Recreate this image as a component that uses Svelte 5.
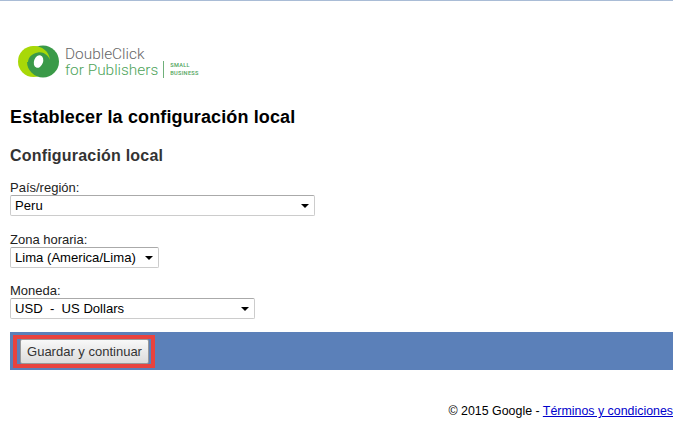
<script>
    const fields = [
        { label: 'País/región:', value: 'Peru', width: 305 },
        { label: 'Zona horaria:', value: 'Lima (America/Lima)', width: 149 },
        { label: 'Moneda:', value: 'USD\u00a0\u00a0-\u00a0\u00a0US Dollars', width: 245 }
    ];
</script>

<div class="page">
    <div class="logo">
        <svg width="41" height="33" viewBox="0 0 41 33">
            <circle cx="15.5" cy="16.5" r="15.5" fill="#a8d808"/>
            <circle cx="25" cy="16.5" r="16" fill="#3a9a48"/>
            <path d="M15.5 1 C24 1 31 6 32 15 C30 10 25 6.5 20 7.5 C14 8.5 10.5 12 10 17 L4 17 L6 6 Z" fill="#a8d808"/>
            <ellipse cx="20.5" cy="16.5" rx="4.5" ry="6.5" transform="rotate(20 20.5 16.5)" fill="white"/>
        </svg>
        <div class="logo-name">
            <span class="dc">DoubleClick</span>
            <span class="fp">for Publishers</span>
        </div>
        <div class="logo-tier">SMALL<br />BUSINESS</div>
    </div>

    <h1>Establecer la configuración local</h1>
    <h2>Configuración local</h2>

    {#each fields as field}
        <div class="field">
            <label for={field.label}>{field.label}</label>
            <div class="select" style="width: {field.width}px">
                <select id={field.label}>
                    <option>{field.value}</option>
                </select>
            </div>
        </div>
    {/each}

    <div class="actions">
        <div class="highlight">
            <button>Guardar y continuar</button>
        </div>
    </div>

    <div class="footer">© 2015 Google - <a href="#terms">Términos y condiciones</a></div>
</div>

<style>
    :global(body) {
        margin: 0;
        background: white;
    }

    .page {
        height: 424px;
        box-sizing: border-box;
        border-top: 1px solid #a9bcd6;
        font-family: "Liberation Sans", Arial, sans-serif;
        font-size: 13px;
        color: #000;
        overflow: hidden;
    }

    .logo {
        display: flex;
        align-items: center;
        margin: 44px 0 0 18px;
        height: 33px;
    }

    .logo svg {
        flex: none;
    }

    .logo-name {
        display: flex;
        flex-direction: column;
        margin-left: 6px;
        padding-right: 5px;
        font-family: Roboto, sans-serif;
        font-weight: 300;
        font-size: 15.4px;
        line-height: 16px;
    }

    .dc {
        color: #666;
    }

    .fp {
        color: #4ea35a;
    }

    .logo-tier {
        margin-top: 15px;
        height: 17px;
        padding-left: 6px;
        border-left: 1px solid #6fb07a;
        font-family: Roboto, sans-serif;
        font-size: 5.6px;
        font-weight: 500;
        line-height: 8px;
        letter-spacing: 0.3px;
        color: #4ea35a;
    }

    h1 {
        margin: 29px 0 0 10px;
        font-size: 18px;
        line-height: 21px;
        font-weight: bold;
        letter-spacing: 0.13px;
    }

    h2 {
        margin: 17px 0 14px 10px;
        font-size: 16px;
        line-height: 21px;
        font-weight: bold;
        color: #333;
        letter-spacing: 0.2px;
    }

    .field {
        margin-left: 10px;
    }

    .field + .field {
        margin-top: 15.5px;
    }

    label {
        display: block;
        line-height: 15px;
        color: #222;
    }

    .select {
        position: relative;
        height: 21px;
    }

    .select::after {
        content: "";
        position: absolute;
        right: 6px;
        top: 9px;
        border: 4px solid transparent;
        border-top-color: #000;
        border-bottom: 0;
    }

    select {
        appearance: none;
        width: 100%;
        height: 21px;
        padding: 0 0 0 4px;
        background: white;
        border: 1px solid #ccc;
        border-top-color: #aaa;
        border-radius: 2px;
        font: inherit;
        font-size: 13.1px;
        color: #000;
    }

    .actions {
        margin: 13px 0 0 10px;
        height: 38px;
        padding: 3px;
        box-sizing: border-box;
        background: #5b80b9;
    }

    .highlight {
        width: 142px;
        height: 33px;
        box-sizing: border-box;
        border: 4px solid #e8433f;
        padding: 0 3px;
    }

    button {
        display: block;
        width: 129px;
        height: 25px;
        padding: 0;
        background: linear-gradient(#f8f8f8, #dcdcdc);
        border: 1px solid #999;
        border-radius: 2px;
        font: inherit;
        font-size: 13px;
        color: #333;
    }

    .footer {
        margin-top: 34px;
        text-align: right;
        font-size: 12.4px;
        line-height: 15px;
    }

    a {
        color: #00c;
    }
</style>
